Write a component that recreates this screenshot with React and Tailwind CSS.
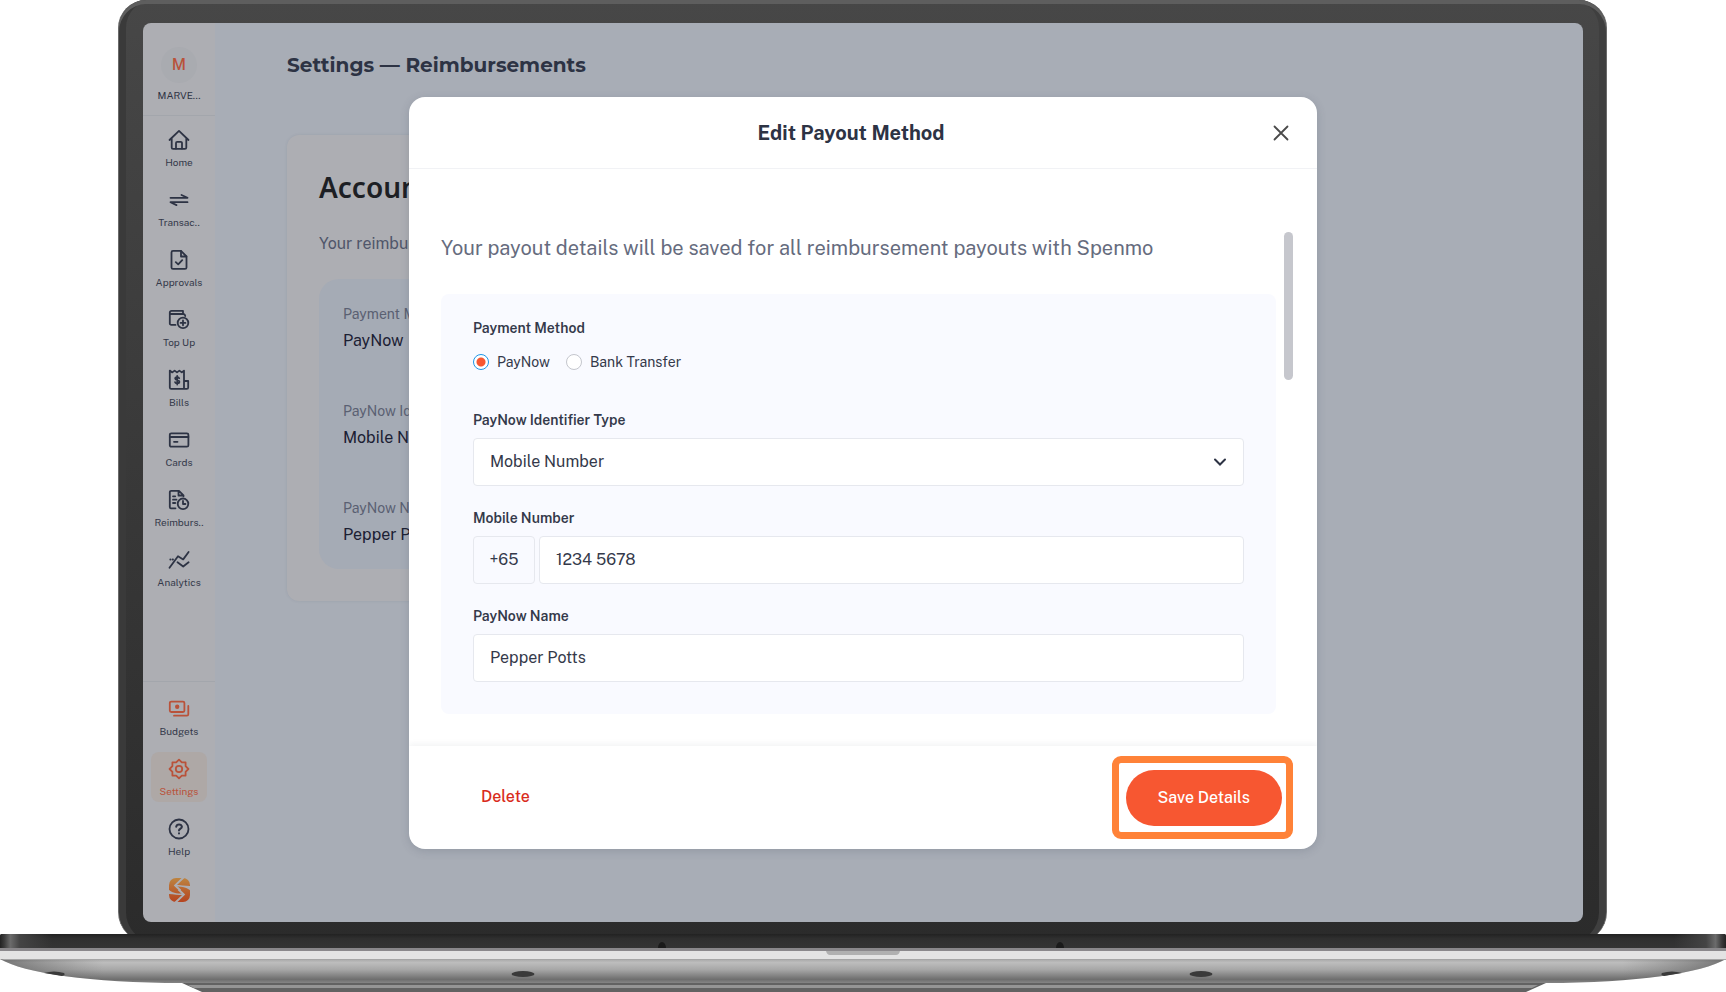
import { useState } from 'react';

const Icon = ({ children }) => (
    <svg width="22" height="22" viewBox="0 0 22 22" fill="none" stroke="currentColor" strokeWidth="1.8" strokeLinecap="round" strokeLinejoin="round" aria-hidden="true">
        {children}
    </svg>
);

// Main navigation
const mainItems = [
    {
        label: "Home",
        icon: <Icon><path d="M1.5 11 11 1.9 20.5 11M3.7 9v9.4a1.4 1.4 0 0 0 1.4 1.4h11.8a1.4 1.4 0 0 0 1.4-1.4V9" /><path d="M8 19.5v-5.4a1.2 1.2 0 0 1 1.2-1.2h3.6a1.2 1.2 0 0 1 1.2 1.2v5.4" /></Icon>
    },
    {
        label: "Transac..",
        icon: <Icon><path d="M2.5 8.8h17L13.5 6M19.5 13.2h-17l6 2.9" /></Icon>
    },
    {
        label: "Approvals",
        icon: <Icon><path d="M13 1.9H5A1.5 1.5 0 0 0 3.5 3.4v15A1.5 1.5 0 0 0 5 19.9h12a1.5 1.5 0 0 0 1.5-1.5V7.5z" /><path d="M13 2v5.5h5.4M7.8 13.2l2.4 2.2 4-4.2" /></Icon>
    },
    {
        label: "Top Up",
        icon: <Icon><path d="M7.5 15.9H3.3A1.5 1.5 0 0 1 1.8 14.4V3.6A1.8 1.8 0 0 1 3.6 1.9H15v3M1.8 5h13.4a2 2 0 0 1 2 2" /><circle cx="15" cy="13.9" r="5.3" /><path d="M15 11.5v4.8M12.6 13.9h4.8" /></Icon>
    },
    {
        label: "Bills",
        icon: <Icon><path d="M16 12V1.6l-2.2 1.8-2.4-1.8L9 3.4 6.6 1.6 4.3 3.4 1.8 1.6v16.8a1.4 1.4 0 0 0 1.4 1.4h15.6a1.4 1.4 0 0 0 1.4-1.4V12H16v7.6" /><path d="M11.2 9.2c-.3-.8-1-1.1-2-1.1-1.2 0-2 .6-2 1.5 0 2.2 4.2 1 4.2 3.2 0 1-.9 1.6-2.2 1.6-1.1 0-2-.5-2.2-1.3M9.2 6.9v8.7" /></Icon>
    },
    {
        label: "Cards",
        icon: <Icon><rect x="1.8" y="4.3" width="18.6" height="13.4" rx="1.5" /><path d="M1.8 8h18.6M6 12.8h3.5" /></Icon>
    },
    {
        label: "Reimburs..",
        icon: <Icon><path d="M7.5 19.3H3.2a1.4 1.4 0 0 1-1.4-1.4V3.2a1.4 1.4 0 0 1 1.4-1.4H11l4.5 4.5v1M10.5 2v4.5H15M5 7.3h2.2M5 10.7h3.5M5 14h2.2" /><circle cx="15" cy="14.8" r="5.3" /><path d="M15 12v3h2.4" /></Icon>
    },
    {
        label: "Analytics",
        icon: <Icon><path d="M1.5 18.8 10 7.2l5.2 3.2 5.4-7.4M9.5 13.3l5.7 4.2 5.4-4.2" /><path d="M2.3 10.5h.1M4.5 10.5h.5" /></Icon>
    }
];

const bottomItems = [
    {
        label: "Budgets",
        accent: true,
        icon: <Icon><rect x="1.8" y="3.6" width="14.6" height="10.4" rx="1.4" /><circle cx="9.2" cy="8.8" r="1.3" fill="currentColor" /><path d="M20.3 8v8.3a1.4 1.4 0 0 1-1.4 1.4H6" /></Icon>
    },
    {
        label: "Settings",
        accent: true,
        active: true,
        icon: <Icon><path d="m11 1.7 2.8 2.7h3.8v3.8L20.4 11l-2.8 2.8v3.8h-3.8L11 20.3l-2.8-2.7H4.4v-3.8L1.6 11l2.8-2.8V4.4h3.8z" /><circle cx="11" cy="11" r="3.2" /></Icon>
    },
    {
        label: "Help",
        icon: <Icon><circle cx="11" cy="11" r="9.5" /><path d="M8.2 8.7a2.9 2.6 0 0 1 5.7 0c0 1.9-2.9 2-2.9 3.9M11 15.3v.1" strokeWidth="2" /></Icon>
    }
];

const NavItem = ({ item }) => (
    <a
        href="#"
        className={`flex h-[50px] w-14 flex-col items-center gap-1 rounded-lg pt-1.5 ${item.active ? 'bg-[#aea8a6]' : ''} ${item.accent ? 'text-[#b9523a]' : 'text-[#2d3344]'}`}
    >
        {item.icon}
        <span className={`text-[10px] leading-[14px] ${item.active ? 'text-[#b9523a]' : 'text-[#34394a]'}`}>{item.label}</span>
    </a>
);

const Logo = () => (
    <svg className="mt-4 mb-5" width="21" height="24" viewBox="0 0 21 24" fill="none" aria-hidden="true">
        <defs>
            <linearGradient id="logo" x1="0" y1="0" x2="0" y2="1">
                <stop offset="0" stopColor="#bd8440" />
                <stop offset="1" stopColor="#b54420" />
            </linearGradient>
        </defs>
        <rect width="21" height="24" rx="7" fill="url(#logo)" />
        <path d="M14.5-.5 6.2 7.4l5.3 5M6.5 24.5l8.3-7.9-5.3-5" stroke="#adaeb3" strokeWidth="2" />
        <path d="M6 6.9c5 0 11 .8 15.500 1.100v5C19 9.500 14 8.300 6 8.400zM15 17.100c-5 0-11-.8-15.500-1.100v-5C2 14.500 7 15.700 15 15.600z" fill="#adaeb3" />
    </svg>
);

const Sidebar = () => (
    <nav className="flex w-[72px] shrink-0 flex-col items-center bg-[#adaeb3] shadow-[1px_0_4px_rgba(60,80,110,0.15)]">
        <div className="flex w-full flex-col items-center gap-1.5 border-b border-[#a3a6ac] pt-6 pb-3.5">
            <div className="flex h-9 w-9 items-center justify-center rounded-full bg-[#a9abb0] text-base font-medium text-[#b9523a]">M</div>
            <span className="text-[10px] leading-3 text-[#2d3344]">MARVE...</span>
        </div>
        <div className="flex flex-col gap-2.5 pt-[7px]">
            {mainItems.map((item) => <NavItem key={item.label} item={item} />)}
        </div>
        <div className="mt-auto flex w-full flex-col items-center gap-2.5 border-t border-[#a3a6ac] pt-2.5">
            {bottomItems.map((item) => <NavItem key={item.label} item={item} />)}
        </div>
        <Logo />
    </nav>
);

const accountDetails = [
    { label: "Payment Method", value: "PayNow" },
    { label: "PayNow Identifier", value: "Mobile Number" },
    { label: "PayNow Name", value: "Pepper Potts" }
];

const SettingsPage = () => (
    <main className="flex-1 bg-[#a8adb6] pt-7 pl-[72px]">
        <h1 className="font-['Montserrat','Inter',sans-serif] text-xl leading-7 font-bold text-[#2d3344]">Settings — Reimbursements</h1>
        <section className="mt-14 max-w-[1000px] rounded-xl bg-[#adaeb3] p-8 shadow-[0_0_3px_rgba(60,70,90,0.12)]">
            <h2 className="font-['Noto_Sans',sans-serif] text-[28px] leading-10 font-semibold text-[#1d1f24]">Account</h2>
            <p className="mt-[25px] text-base text-[#50566a]">Your reimburse</p>
            <dl className="mt-[23px] flex flex-col gap-[47px] rounded-[20px] bg-[#a5abb5] px-6 pt-6 pb-[22px]">
                {accountDetails.map((detail) => (
                    <div key={detail.label}>
                        <dt className="text-sm leading-[22px] text-[#5a6072]">{detail.label}</dt>
                        <dd className="mt-1 text-base leading-6 text-[#1b2033]">{detail.value}</dd>
                    </div>
                ))}
            </dl>
        </section>
    </main>
);

const Radio = ({ id, label, checked, onChange }) => (
    <div className="flex items-center gap-2">
        <input
            type="radio"
            id={id}
            name="method"
            checked={checked}
            onChange={onChange}
            className="h-4 w-4 appearance-none rounded-full border border-[#c4c6cd] bg-white checked:border-[#1c96e8] checked:bg-[radial-gradient(circle,#f75731_4px,#fff_5px)]"
        />
        <label htmlFor={id} className="text-sm leading-5 text-[#34394a]">{label}</label>
    </div>
);

const fieldClass = "h-12 w-full rounded border border-[#e6e8ee] bg-white px-4 text-base text-[#34394a] outline-none";
const labelClass = "text-sm leading-5 font-semibold text-[#34394a]";

const PayoutModal = () => {
    const [method, setMethod] = useState("paynow");
    const [mobile, setMobile] = useState("1234 5678");
    const [name, setName] = useState("Pepper Potts");

    return (
        <div role="dialog" aria-labelledby="modal-title" className="flex w-[908px] max-w-full flex-col overflow-hidden rounded-2xl bg-white shadow-[0_2px_10px_rgba(60,70,90,0.2)]">
            {/* Header */}
            <div className="flex items-center gap-2 border-b border-[#f1f2f5] px-7 pt-[22px] pb-[21px]">
                <h2 id="modal-title" className="flex-1 text-center text-xl leading-7 font-bold text-[#2d3344]">Edit Payout Method</h2>
                <button type="button" aria-label="Close">
                    <svg width="16" height="16" viewBox="0 0 16 16" stroke="#4a4a4a" strokeWidth="1.8" strokeLinecap="round">
                        <path d="M1.5 1.5l13 13M14.5 1.5l-13 13" />
                    </svg>
                </button>
            </div>

            {/* Body */}
            <div className="flex gap-2 pt-[63px] pr-6 pb-8 pl-8">
                <div className="flex-1">
                    <p className="text-xl leading-8 text-[#666c7e]">Your payout details will be saved for all reimbursement payouts with Spenmo</p>
                    <form className="mt-[30px] flex flex-col gap-[22px] rounded-lg bg-[#f9faff] px-8 pt-6 pb-8">
                        <fieldset className="pb-4">
                            <legend className={labelClass}>Payment Method</legend>
                            <div className="mt-3.5 flex gap-4">
                                <Radio id="paynow" label="PayNow" checked={method === "paynow"} onChange={() => setMethod("paynow")} />
                                <Radio id="bank" label="Bank Transfer" checked={method === "bank"} onChange={() => setMethod("bank")} />
                            </div>
                        </fieldset>
                        <div className="flex flex-col gap-2">
                            <label htmlFor="type" className={labelClass}>PayNow Identifier Type</label>
                            <div className="relative">
                                <select id="type" className={`${fieldClass} appearance-none`}>
                                    <option>Mobile Number</option>
                                </select>
                                <svg className="pointer-events-none absolute top-5 right-[17px]" width="14" height="9" viewBox="0 0 14 9" fill="none" stroke="#2d3344" strokeWidth="2" strokeLinecap="round">
                                    <path d="M2 1.5l5 5 5-5" />
                                </svg>
                            </div>
                        </div>
                        <div className="flex flex-col gap-2">
                            <label htmlFor="mobile" className={labelClass}>Mobile Number</label>
                            <div className="flex gap-1">
                                <span className="flex h-12 w-[62px] shrink-0 items-center justify-center rounded border border-[#e6e8ee] text-base text-[#34394a]">+65</span>
                                <input id="mobile" value={mobile} onChange={(e) => setMobile(e.target.value)} className={fieldClass} />
                            </div>
                        </div>
                        <div className="flex flex-col gap-2">
                            <label htmlFor="name" className={labelClass}>PayNow Name</label>
                            <input id="name" value={name} onChange={(e) => setName(e.target.value)} className={fieldClass} />
                        </div>
                    </form>
                </div>
                <div className="h-[148px] w-[9px] rounded-full bg-[#c6c7cd]" />
            </div>

            {/* Footer */}
            <div className="flex items-center justify-between px-6 py-2.5 shadow-[0_-2px_6px_rgba(40,50,70,0.06)]">
                <button type="button" className="px-12 text-base font-medium text-[#d92b1c]">Delete</button>
                <div className="rounded-[9px] border-[7px] border-[#ff8238] pt-[7px] pr-1 pb-1.5 pl-[7px]">
                    <button type="button" className="h-14 rounded-full bg-[#f75731] px-8 text-base font-medium text-white">Save Details</button>
                </div>
            </div>
        </div>
    );
};

// Bottom half of the laptop
const LaptopBase = () => (
    <svg className="relative h-[58px] w-full" viewBox="0 0 1726 58" preserveAspectRatio="none" aria-hidden="true">
        <defs>
            <linearGradient id="deck" x1="0" y1="0" x2="0" y2="1">
                <stop offset="0" stopColor="#222" />
                <stop offset="0.3" stopColor="#2f2f2f" />
                <stop offset="1" stopColor="#353535" />
            </linearGradient>
            <linearGradient id="shine" x1="0" y1="0" x2="1" y2="0">
                <stop offset="0" stopColor="#222" />
                <stop offset="0.08" stopColor="#3a3a3a" />
                <stop offset="0.2" stopColor="#6b6b6b" />
                <stop offset="0.38" stopColor="#444" />
                <stop offset="1" stopColor="#444" stopOpacity="0" />
            </linearGradient>
            <linearGradient id="metal" x1="0" y1="0" x2="0" y2="1">
                <stop offset="0" stopColor="#a8a8a8" />
                <stop offset="0.15" stopColor="#bdbdbd" />
                <stop offset="0.45" stopColor="#a6a6a6" />
                <stop offset="0.85" stopColor="#6e6e6e" />
                <stop offset="1" stopColor="#858585" />
            </linearGradient>
            <linearGradient id="edge" x1="0" y1="0" x2="1" y2="0">
                <stop offset="0" stopColor="#444" stopOpacity="0.6" />
                <stop offset="0.06" stopColor="#666" stopOpacity="0" />
                <stop offset="0.94" stopColor="#666" stopOpacity="0" />
                <stop offset="1" stopColor="#444" stopOpacity="0.6" />
            </linearGradient>
        </defs>
        <path d="M182 49h1364l-20 9H202z" fill="#626262" />
        <path d="M188 51h1350l-6 3H194z" fill="#959595" />
        <path d="M0 25h1726c-24 14-90 24-180 24H182C90 49 24 39 0 25z" fill="url(#metal)" />
        <path d="M0 25h1726c-24 14-90 24-180 24H182C90 49 24 39 0 25z" fill="url(#edge)" />
        <path d="M0 2q0-2 2-2h1722q2 0 2 2v13H0z" fill="url(#deck)" />
        <path d="M0 2q0-2 2-2h50v15H0z" fill="url(#shine)" />
        <path d="M0 2q0-2 2-2h50v15H0z" fill="url(#shine)" transform="translate(1726 0) scale(-1 1)" />
        <path d="M0 14h1726v3H0z" fill="#8a888b" />
        <path d="M0 17h1726v8H0z" fill="#e3e3e3" />
        <path d="M0 25h1726v1H4z" fill="#a5a5a5" />
        <path d="M826 17h74q-1 4-4 4h-66q-3 0-4-4z" fill="#b0b0b0" />
        <path d="M658 14a4 6 0 0 1 8 0zM1056 14a4 6 0 0 1 8 0z" fill="#1a1a1a" />
        <ellipse cx="523" cy="40" rx="11.5" ry="3" fill="#3a3a3a" />
        <ellipse cx="1201" cy="40" rx="11.5" ry="3" fill="#3a3a3a" />
        <path d="M44 39q10-3 20 0 2 2-2 3zM1682 39q-10-3-20 0-2 2 2 3z" fill="#3a3a3a" />
    </svg>
);

const App = () => (
    <div className="flex min-h-screen flex-col bg-white font-['Public_Sans','Inter',sans-serif]">
        <div className="mr-[119px] -mb-2 ml-[118px] flex flex-1 flex-col rounded-t-[28px] rounded-b-[30px] border-x border-[#6a6a6a] bg-linear-to-b from-[#474747] to-[#2b2b2b] shadow-[inset_0_4px_0_#5e5e5e,inset_7px_0_0_#3a3a3a,inset_-7px_0_0_#3f3f3f] pt-[23px] pr-[23px] pb-5 pl-6">
            <div className="relative flex flex-1 overflow-hidden rounded-lg">
                <Sidebar />
                <SettingsPage />
                <div className="absolute inset-0 flex items-center justify-center">
                    <PayoutModal />
                </div>
            </div>
        </div>
        <LaptopBase />
    </div>
);

export default App;
